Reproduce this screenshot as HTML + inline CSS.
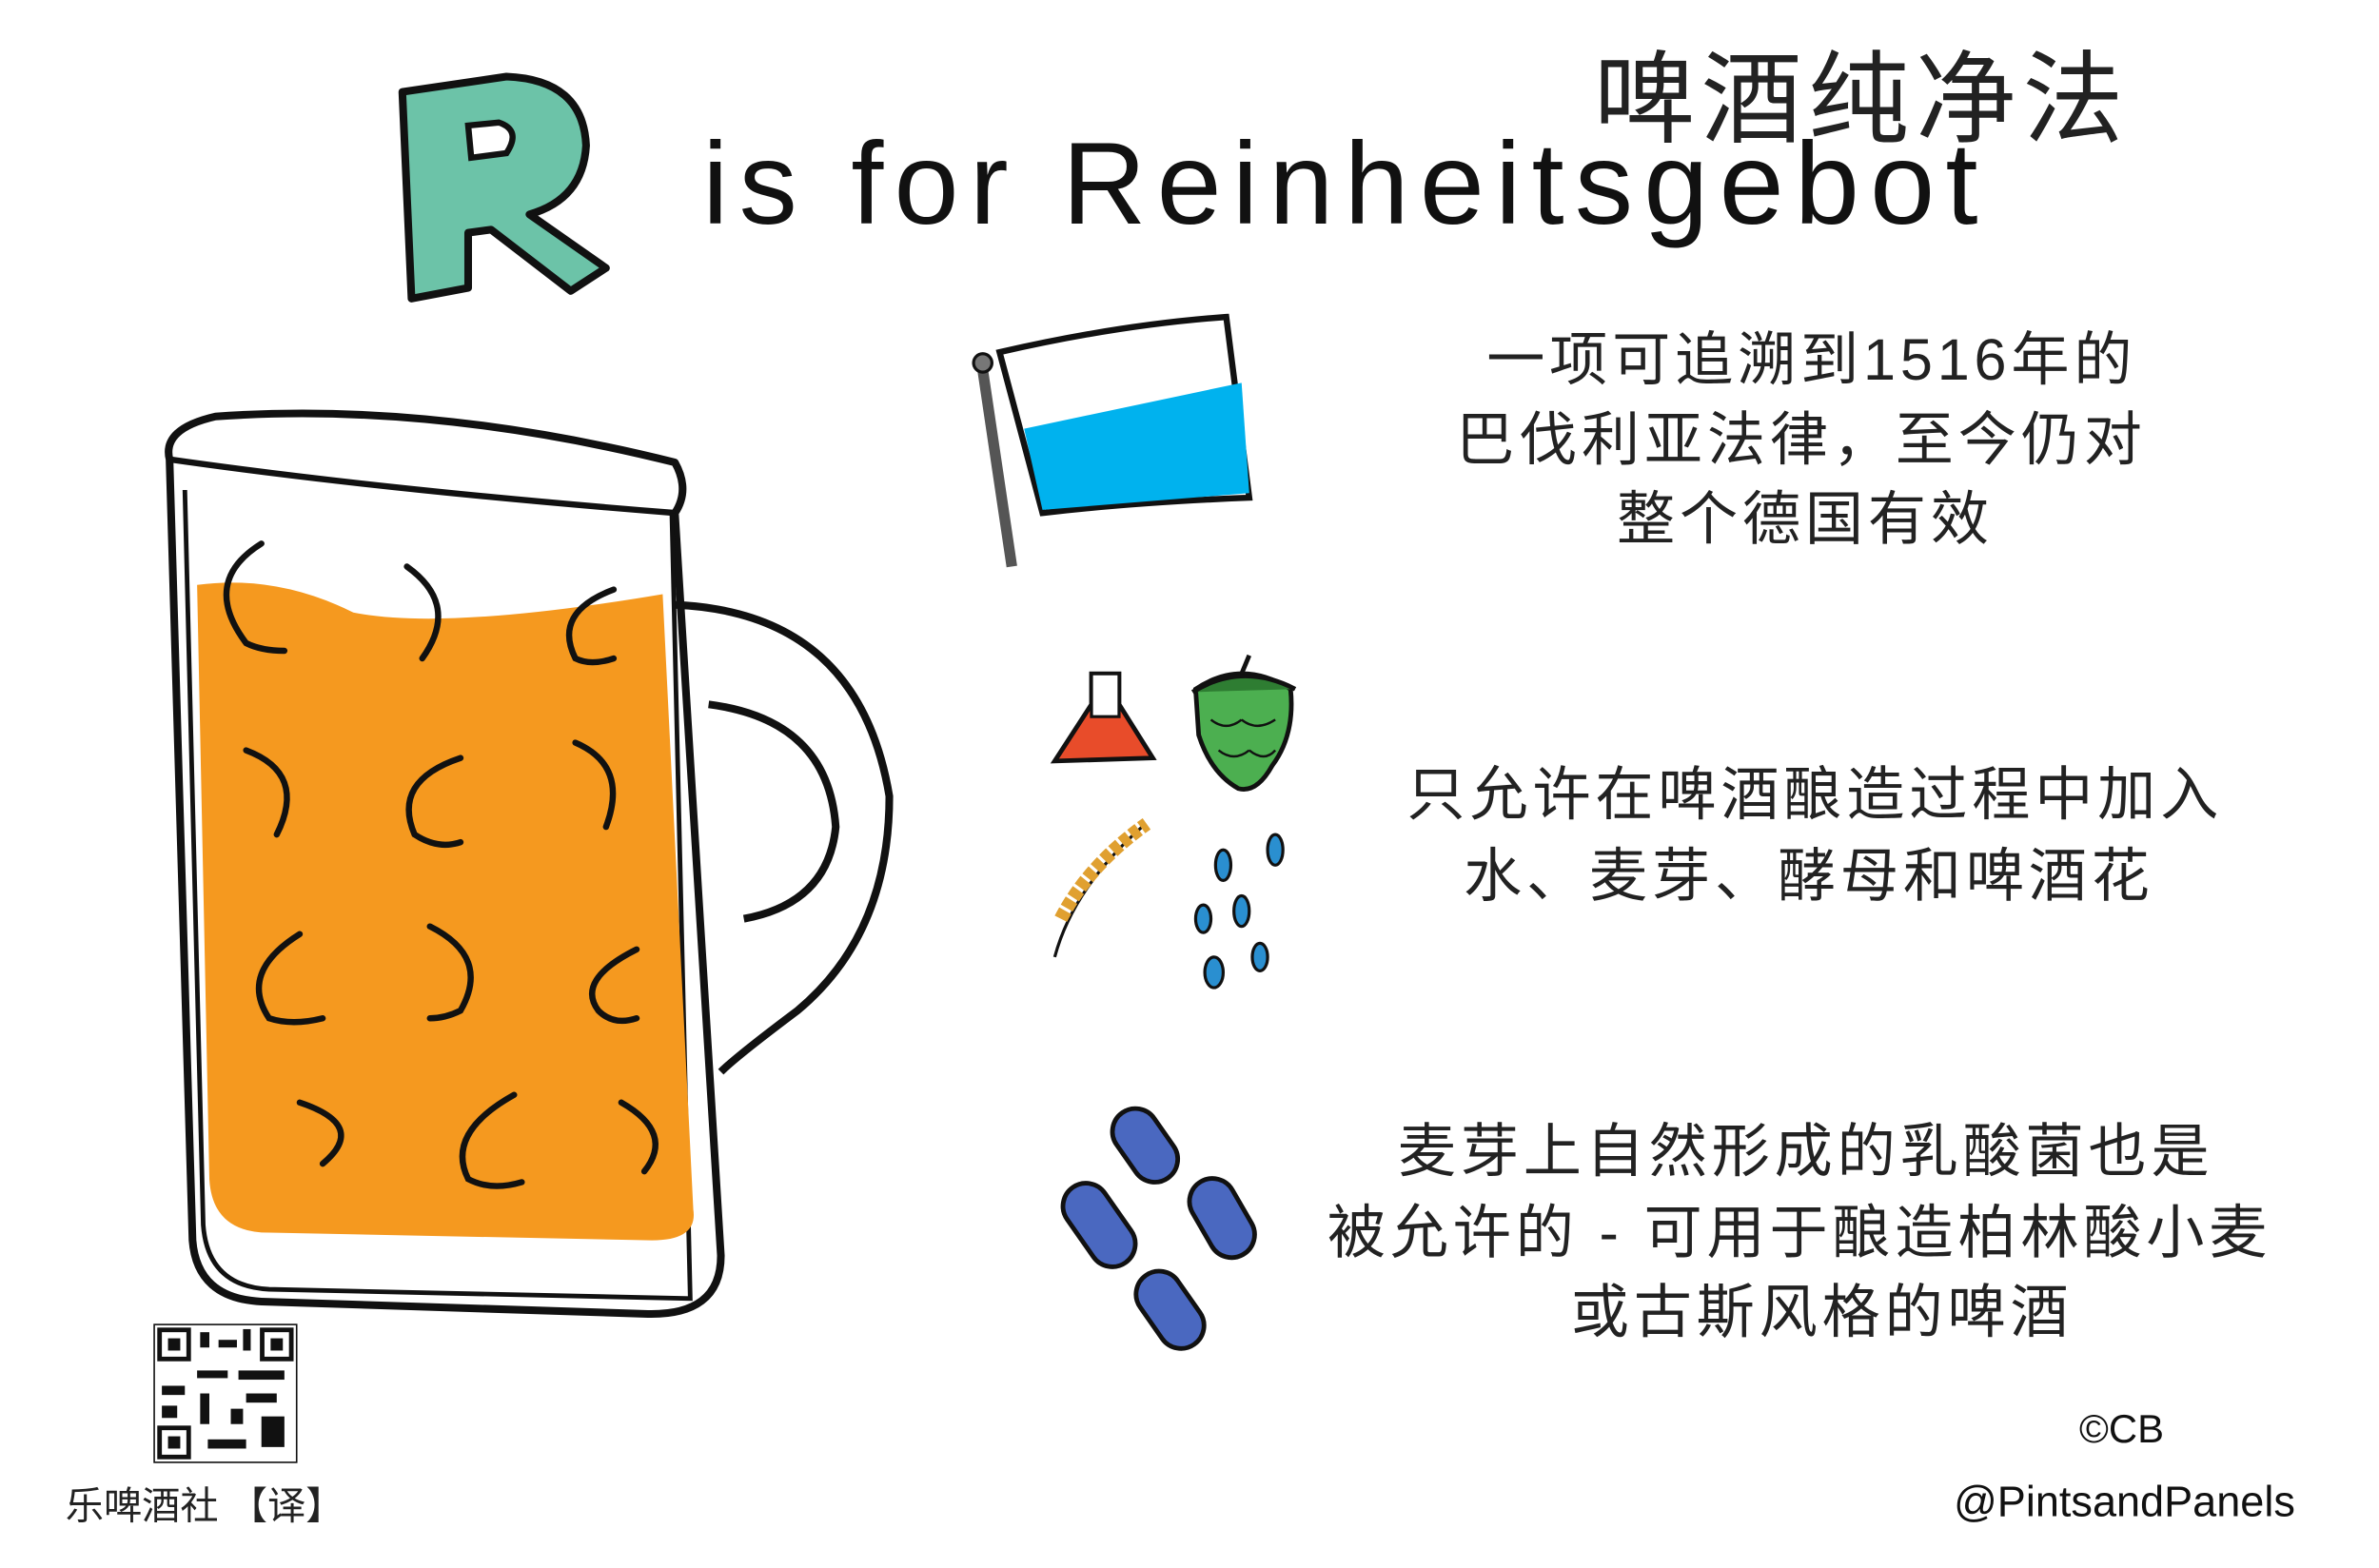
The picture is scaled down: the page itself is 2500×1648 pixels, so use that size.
<!DOCTYPE html>
<html><head><meta charset="utf-8"><style>
html,body{margin:0;padding:0;background:#fff;}
svg{display:block}
.cn{font-family:"Liberation Sans","WenQuanYi Zen Hei","Noto Sans CJK SC",sans-serif;fill:#222;}
</style></head><body>
<svg width="2500" height="1648" viewBox="0 0 1552 1024" xmlns="http://www.w3.org/2000/svg">
<rect width="1552" height="1024" fill="#fff"/>
<!-- R -->
<path d="M262 60 L330 50 Q380 52 382 95 Q380 130 345 140 L395 175 L372 190 L320 150 L305 152 L305 188 L268 195 Z" fill="#6cc3a8" stroke="#111" stroke-width="5" stroke-linejoin="round"/>
<path d="M305 82 L325 80 Q340 85 330 100 L307 103 Z" fill="#fff" stroke="#111" stroke-width="4"/>
<text x="458" y="146" font-family="Liberation Sans,sans-serif" font-size="76" fill="#111" letter-spacing="7">is for Reinheitsgebot</text>
<text x="1040" y="88" class="cn" font-size="66" letter-spacing="4">啤酒纯净法</text>
<!-- mug -->
<path d="M110 300 Q105 280 140 272 Q280 262 440 302 Q450 320 440 335 L470 820 Q470 860 420 858 L170 850 Q128 848 125 810 Z" fill="none" stroke="#111" stroke-width="5" stroke-linejoin="round"/>
<path d="M110 300 Q250 320 440 335" fill="none" stroke="#111" stroke-width="4"/>
<path d="M120 320 L132 800 Q135 840 175 842 L450 848 L438 335" fill="none" stroke="#111" stroke-width="3"/>
<path d="M128 382 Q180 375 230 400 Q290 412 432 388 L452 790 Q455 810 425 810 L175 805 Q138 805 136 770 Z" fill="#f5991f"/>
<path d="M440 395 Q560 400 580 520 Q580 610 520 660 Q480 690 470 700" fill="none" stroke="#111" stroke-width="5"/>
<path d="M462 460 Q540 470 545 540 Q540 590 485 600" fill="none" stroke="#111" stroke-width="5"/>
<g fill="none" stroke="#111" stroke-width="4" stroke-linecap="round">
<path d="M170 355 Q130 380 160 420 Q170 425 185 425"/><path d="M265 370 Q300 395 275 430"/><path d="M400 385 Q360 400 375 430 Q385 435 400 430"/>
<path d="M160 490 Q200 505 180 545"/><path d="M300 495 Q255 510 270 545 Q285 555 300 550"/><path d="M375 485 Q410 500 395 540"/>
<path d="M195 610 Q155 635 175 665 Q190 670 210 665"/><path d="M280 605 Q320 625 300 660 Q290 665 280 665"/><path d="M415 620 Q375 640 390 660 Q400 670 415 665"/>
<path d="M195 720 Q240 735 210 760"/><path d="M335 715 Q290 740 305 770 Q320 778 340 772"/><path d="M405 720 Q440 740 420 765"/>
</g>
<!-- flag -->
<path d="M640 235 L660 370" stroke="#555" stroke-width="7"/>
<circle cx="641" cy="237" r="6" fill="#777" stroke="#111" stroke-width="2"/>
<path d="M652 230 Q730 212 800 207 L815 325 Q740 328 680 335 Z" fill="#fff" stroke="#111" stroke-width="4"/>
<path d="M668 280 L810 250 L815 322 L680 333 Z" fill="#00b2ee"/>
<text x="970" y="248" class="cn" font-size="38" letter-spacing="3">一项可追溯到1516年的</text>
<text x="950" y="300" class="cn" font-size="38" letter-spacing="3">巴伐利亚法律，至今仍对</text>
<text x="1055" y="352" class="cn" font-size="38" letter-spacing="3">整个德国有效</text>
<!-- icons -->
<path d="M712 440 L730 440 L730 460 L752 495 L688 497 L712 460 Z" fill="#e84c2a" stroke="#111" stroke-width="3"/>
<path d="M712 440 L730 440 L730 468 L712 468 Z" fill="#fff" stroke="#111" stroke-width="2"/>
<path d="M780 450 Q810 430 842 450 Q845 480 830 500 Q820 518 808 515 Q790 505 782 480 Z" fill="#4caf50" stroke="#111" stroke-width="3"/>
<path d="M778 452 Q810 432 845 450" fill="#2e7d32" stroke="#111" stroke-width="3"/>
<path d="M810 440 L815 428" stroke="#111" stroke-width="3"/>
<g fill="none" stroke="#111" stroke-width="1.5"><path d="M790 470 Q800 478 810 470"/><path d="M810 470 Q820 478 832 470"/><path d="M795 490 Q805 498 815 490"/><path d="M815 490 Q825 498 832 490"/></g>
<path d="M688 625 Q700 580 745 540" stroke="#111" stroke-width="2" fill="none"/>
<path d="M692 600 Q710 565 748 538" stroke="#e0a030" stroke-width="9" fill="none" stroke-dasharray="6 2"/>
<g fill="#2a8fd0" stroke="#111" stroke-width="2">
<ellipse cx="798" cy="565" rx="5" ry="10"/><ellipse cx="832" cy="555" rx="5" ry="10"/><ellipse cx="785" cy="600" rx="5" ry="9"/><ellipse cx="810" cy="595" rx="5" ry="10"/><ellipse cx="792" cy="635" rx="6" ry="10"/><ellipse cx="822" cy="625" rx="5" ry="9"/>
</g>
<text x="918" y="532" class="cn" font-size="38" letter-spacing="3">只允许在啤酒酿造过程中加入</text>
<text x="955" y="585" class="cn" font-size="38" letter-spacing="3">水、麦芽、酵母和啤酒花</text>
<g fill="#4a68c0" stroke="#111" stroke-width="3">
<rect x="732" y="722" width="30" height="52" rx="15" transform="rotate(-35 747 748)"/>
<rect x="782" y="768" width="30" height="55" rx="15" transform="rotate(-30 797 795)"/>
<rect x="702" y="770" width="30" height="60" rx="15" transform="rotate(-35 717 800)"/>
<rect x="748" y="828" width="30" height="55" rx="15" transform="rotate(-35 763 855)"/>
</g>
<text x="912" y="765" class="cn" font-size="38" letter-spacing="3">麦芽上自然形成的乳酸菌也是</text>
<text x="866" y="818" class="cn" font-size="38" letter-spacing="3">被允许的 - 可用于酿造柏林酸小麦</text>
<text x="1025" y="870" class="cn" font-size="38" letter-spacing="3">或古斯风格的啤酒</text>
<!-- QR -->
<rect x="100" y="865" width="93" height="90" fill="#fff" stroke="#111" stroke-width="1"/>
<g fill="#111">
<rect x="102" y="867" width="22" height="22"/><rect x="169" y="867" width="22" height="22"/><rect x="102" y="931" width="22" height="22"/>
</g>
<g fill="#fff"><rect x="105" y="870" width="16" height="16"/><rect x="172" y="870" width="16" height="16"/><rect x="105" y="934" width="16" height="16"/></g>
<g fill="#111"><rect x="109" y="874" width="8" height="8"/><rect x="176" y="874" width="8" height="8"/><rect x="109" y="938" width="8" height="8"/>
<rect x="130" y="870" width="6" height="10"/><rect x="142" y="875" width="12" height="5"/><rect x="158" y="868" width="5" height="14"/><rect x="128" y="895" width="20" height="5"/><rect x="155" y="895" width="30" height="6"/><rect x="105" y="905" width="15" height="6"/><rect x="130" y="910" width="6" height="20"/><rect x="160" y="910" width="20" height="6"/><rect x="170" y="925" width="15" height="20"/><rect x="135" y="940" width="25" height="6"/><rect x="150" y="920" width="8" height="10"/><rect x="105" y="918" width="10" height="8"/></g>
<text x="42" y="992" class="cn" font-size="25">乐啤酒社 【译】</text>
<text x="1357" y="942" font-family="Liberation Sans,sans-serif" font-size="26" fill="#111">©CB</text>
<text x="1275" y="990" font-family="Liberation Sans,sans-serif" font-size="28" fill="#111">@PintsandPanels</text>
</svg>
</body></html>
